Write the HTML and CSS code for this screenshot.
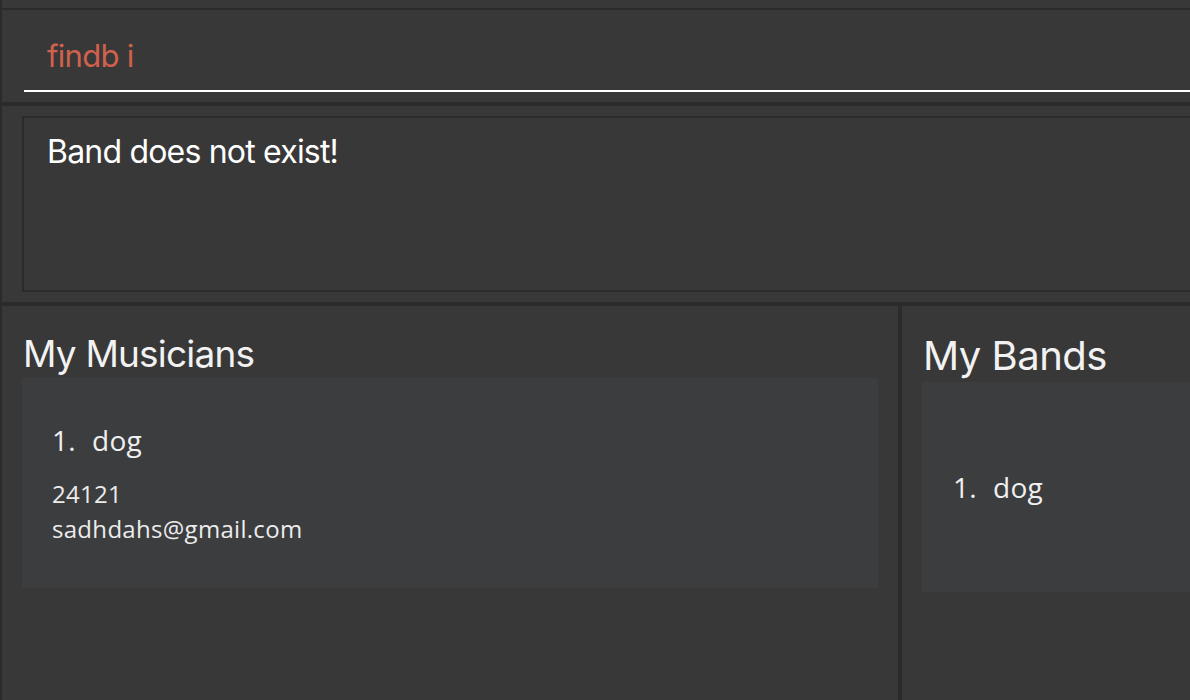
FILE: index.html
```html
<!DOCTYPE html>
<html>
<head>
<meta charset="utf-8">
<link rel="stylesheet" href="styles.css">
</head>
<body>
<div class="app">
  <div class="top-strip"></div>
  <div class="command">
    <div class="command-field"><span class="command-text">findb i</span></div>
  </div>
  <div class="result-wrap">
    <div class="result-box">Band does not exist!</div>
  </div>
  <div class="panels">
    <section class="panel panel-left">
      <h2 class="panel-title">My Musicians</h2>
      <div class="card">
        <div class="card-name"><span class="idx">1.</span>dog</div>
        <div class="card-detail">24121</div>
        <div class="card-detail">sadhdahs@gmail.com</div>
      </div>
    </section>
    <div class="divider"></div>
    <section class="panel panel-right">
      <h2 class="panel-title title-bands">My Bands</h2>
      <div class="card card-band">
        <div class="card-name"><span class="idx">1.</span>dog</div>
      </div>
    </section>
  </div>
</div>
</body>
</html>
```

FILE: styles.css
```css
* { box-sizing: border-box; }
html, body {
  margin: 0;
  padding: 0;
  background: #383838;
  overflow: hidden;
}
.app {
  width: 1190px;
  height: 700px;
  border-left: 2px solid #2b2b2b;
  display: flex;
  flex-direction: column;
  font-family: Inter, "Noto Sans", sans-serif;
  color: #f0f0f0;
}
.top-strip {
  height: 10px;
  border-bottom: 2px solid #2b2b2b;
  flex: none;
}
.command {
  height: 96px;
  flex: none;
  padding: 0 0 0 22px;
  border-bottom: 4px solid #2b2b2b;
}
.command-field {
  height: 82px;
  border-bottom: 2px solid #ffffff;
  padding: 28px 0 0 23px;
}
.command-text {
  display: block;
  color: #d0614c;
  font-size: 31px;
  line-height: 36px;
  letter-spacing: -0.7px;
}
.result-wrap {
  height: 200px;
  flex: none;
  padding: 10px 0 10px 20px;
  border-bottom: 4px solid #2b2b2b;
}
.result-box {
  height: 176px;
  border: 2px solid #2b2b2b;
  border-right: none;
  padding: 14px 0 0 23px;
  font-size: 32px;
  line-height: 40px;
  letter-spacing: -0.8px;
  color: #ffffff;
}
.panels {
  flex: 1;
  display: flex;
  min-height: 0;
}
.panel {
  display: flex;
  flex-direction: column;
  padding: 0 0 0 20px;
}
.panel-left {
  width: 896px;
  padding-right: 20px;
}
.panel-right {
  flex: 1;
}
.divider {
  width: 4px;
  background: #2b2b2b;
  flex: none;
}
.panel-title {
  margin: 0;
  font-weight: 400;
  font-size: 37px;
  line-height: 44px;
  letter-spacing: -0.8px;
  padding: 26px 0 2px 1px;
  color: #f2f2f2;
}
.title-bands {
  font-size: 40px;
  line-height: 48px;
  letter-spacing: -0.5px;
  padding-top: 26px;
  padding-bottom: 2px;
}
.card {
  height: 210px;
  background: #3c3d3f;
  padding: 38px 0 0 30px;
}
.card-name {
  font-size: 28px;
  line-height: 48px;
  margin-bottom: 12px;
  font-family: "Open Sans", sans-serif;
  letter-spacing: 0.3px;
}
.idx {
  display: inline-block;
  width: 40px;
}
.card-detail {
  font-family: "Open Sans", sans-serif;
  font-size: 24px;
  line-height: 35px;
  letter-spacing: 0.3px;
  color: #ececec;
}
.card-band .card-name {
  margin-bottom: 0;
}
.card-band {
  display: flex;
  align-items: center;
  padding: 0 0 0 31px;
}
```
